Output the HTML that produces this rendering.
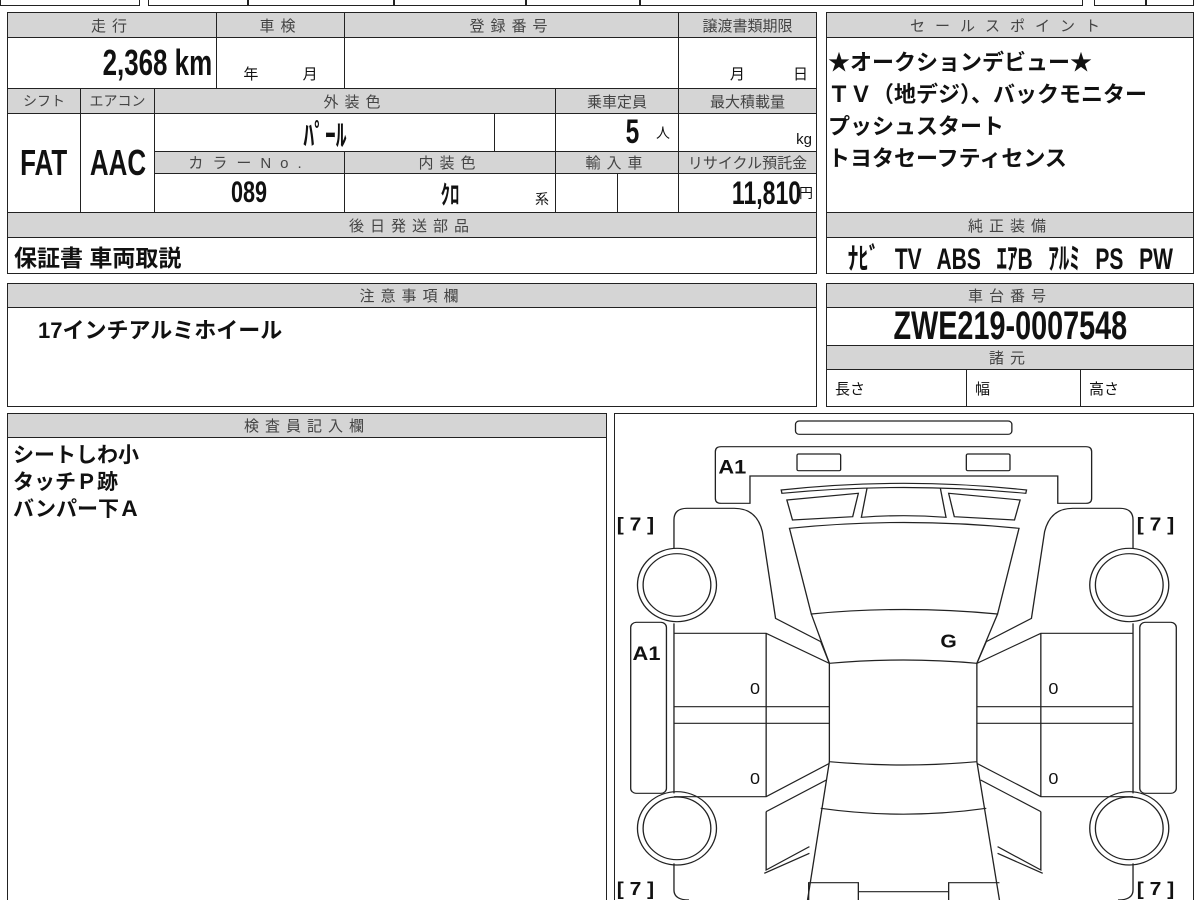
<!DOCTYPE html>
<html><head><meta charset="utf-8">
<style>
body{margin:0;width:1200px;height:900px;background:#fff;position:relative;overflow:hidden;font-family:"Liberation Sans","Noto Sans CJK JP",sans-serif;color:#111}
.c{position:absolute;border:1.5px solid #222;box-sizing:border-box;display:flex;align-items:center;justify-content:center;overflow:hidden;white-space:nowrap}
.h{background:#d5d5d5;color:#444;font-size:15px;letter-spacing:6px}
.b{font-weight:bold}
.n{font-weight:bold;display:inline-block;transform:scaleX(.72)}
</style></head><body>
<!-- top strip -->
<div class="c" style="left:0;top:-10px;width:140px;height:16px"></div>
<div class="c" style="left:148px;top:-10px;width:100px;height:16px"></div>
<div class="c" style="left:248px;top:-10px;width:146px;height:16px"></div>
<div class="c" style="left:394px;top:-10px;width:132px;height:16px"></div>
<div class="c" style="left:526px;top:-10px;width:114px;height:16px"></div>
<div class="c" style="left:640px;top:-10px;width:443px;height:16px"></div>
<div class="c" style="left:1094px;top:-10px;width:52px;height:16px"></div>
<div class="c" style="left:1146px;top:-10px;width:48px;height:16px"></div>

<!-- main left table -->
<div class="c h" style="left:7px;top:12px;width:210px;height:26px">走行</div>
<div class="c h" style="left:216px;top:12px;width:129px;height:26px">車検</div>
<div class="c h" style="left:344px;top:12px;width:335px;height:26px">登録番号</div>
<div class="c h" style="left:678px;top:12px;width:139px;height:26px;letter-spacing:0">譲渡書類期限</div>

<div class="c" style="left:7px;top:37px;width:210px;height:52px;justify-content:flex-end;padding-right:4px"><span class="n" style="font-size:36px;transform-origin:right">2,368&nbsp;km</span></div>
<div class="c" style="left:216px;top:37px;width:129px;height:52px;align-items:flex-end;padding-bottom:4px;font-size:15px;word-spacing:40px">年 月</div>
<div class="c" style="left:344px;top:37px;width:335px;height:52px"></div>
<div class="c" style="left:678px;top:37px;width:139px;height:52px;align-items:flex-end;justify-content:flex-end;padding:0 8px 4px 0;font-size:15px;word-spacing:44px">月 日</div>

<div class="c h" style="left:7px;top:88px;width:74px;height:26px;letter-spacing:0;font-size:14px">シフト</div>
<div class="c h" style="left:80px;top:88px;width:75px;height:26px;letter-spacing:0;font-size:14px">エアコン</div>
<div class="c h" style="left:154px;top:88px;width:402px;height:26px">外装色</div>
<div class="c h" style="left:555px;top:88px;width:124px;height:26px;letter-spacing:0">乗車定員</div>
<div class="c h" style="left:678px;top:88px;width:139px;height:26px;letter-spacing:0">最大積載量</div>

<div class="c" style="left:7px;top:113px;width:74px;height:100px"><span class="n" style="font-size:36px">FAT</span></div>
<div class="c" style="left:80px;top:113px;width:75px;height:100px"><span class="n" style="font-size:36px">AAC</span></div>
<div class="c" style="left:154px;top:113px;width:341px;height:39px"><span class="n" style="font-size:30px">ﾊﾟｰﾙ</span></div>
<div class="c" style="left:494px;top:113px;width:62px;height:39px"></div>
<div class="c" style="left:555px;top:113px;width:124px;height:39px;justify-content:flex-end;padding-right:8px"><span class="n" style="font-size:34px">5</span><span style="font-size:14px;margin-left:14px">人</span></div>
<div class="c" style="left:678px;top:113px;width:139px;height:39px;justify-content:flex-end;align-items:flex-end;padding:0 4px 3px 0;font-size:15px">kg</div>

<div class="c h" style="left:154px;top:151px;width:191px;height:23px;font-size:15px;letter-spacing:9px">カラーNo.</div>
<div class="c h" style="left:344px;top:151px;width:212px;height:23px">内装色</div>
<div class="c h" style="left:555px;top:151px;width:124px;height:23px">輸入車</div>
<div class="c h" style="left:678px;top:151px;width:139px;height:23px;letter-spacing:0">リサイクル預託金</div>

<div class="c" style="left:154px;top:173px;width:191px;height:40px"><span class="n" style="font-size:30px">089</span></div>
<div class="c" style="left:344px;top:173px;width:212px;height:40px"><span class="n" style="font-size:26px">ｸﾛ</span><span style="position:absolute;right:6px;bottom:3px;font-size:14px">系</span></div>
<div class="c" style="left:555px;top:173px;width:63px;height:40px"></div>
<div class="c" style="left:617px;top:173px;width:62px;height:40px"></div>
<div class="c" style="left:678px;top:173px;width:139px;height:40px;justify-content:flex-end;padding-right:3px"><span class="n" style="font-size:32px;transform-origin:right;margin-right:-4px">11,810</span><span style="font-size:14px;margin-left:2px">円</span></div>

<div class="c h" style="left:7px;top:212px;width:810px;height:26px">後日発送部品</div>
<div class="c b" style="left:7px;top:237px;width:810px;height:37px;justify-content:flex-start;padding-left:6px;font-size:23px">保証書 車両取説</div>

<!-- right panel -->
<div class="c h" style="left:826px;top:12px;width:368px;height:26px;letter-spacing:10px">セールスポイント</div>
<div class="c b" style="left:826px;top:37px;width:368px;height:176px;display:block;padding:9px 0 0 1px;font-size:22px;line-height:32px;white-space:normal">★オークションデビュー★<br>ＴＶ（地デジ）、バックモニター<br>プッシュスタート<br>トヨタセーフティセンス</div>
<div class="c h" style="left:826px;top:212px;width:368px;height:26px">純正装備</div>
<div class="c" style="left:826px;top:237px;width:368px;height:37px"><span class="n" style="font-size:30px;word-spacing:14px;transform:scaleX(.7)">ﾅﾋﾞ TV ABS ｴｱB ｱﾙﾐ PS PW</span></div>

<!-- notes -->
<div class="c h" style="left:7px;top:283px;width:810px;height:25px">注意事項欄</div>
<div class="c" style="left:7px;top:307px;width:810px;height:100px;align-items:flex-start;justify-content:flex-start;padding:5px 0 0 30px;font-size:22px;font-weight:bold">17インチアルミホイール</div>

<div class="c h" style="left:826px;top:283px;width:368px;height:25px">車台番号</div>
<div class="c" style="left:826px;top:307px;width:368px;height:39px"><span class="n" style="font-size:40px">ZWE219-0007548</span></div>
<div class="c h" style="left:826px;top:345px;width:368px;height:25px">諸元</div>
<div class="c" style="left:826px;top:369px;width:141px;height:38px;justify-content:flex-start;padding-left:8px;font-size:15px">長さ</div>
<div class="c" style="left:966px;top:369px;width:115px;height:38px;justify-content:flex-start;padding-left:8px;font-size:15px">幅</div>
<div class="c" style="left:1080px;top:369px;width:114px;height:38px;justify-content:flex-start;padding-left:8px;font-size:15px">高さ</div>

<!-- inspector -->
<div class="c h" style="left:7px;top:413px;width:600px;height:25px">検査員記入欄</div>
<div class="c b" style="left:7px;top:437px;width:600px;height:463px;border-bottom:none;display:block;padding:4px 0 0 5px;font-size:21px;line-height:27px;white-space:normal">シートしわ小<br>タッチＰ跡<br>バンパー下Ａ</div>

<!-- diagram -->
<div class="c" style="left:614px;top:413px;width:580px;height:487px;border-bottom:none"></div>
<svg style="position:absolute;left:610px;top:410px" width="590" height="490" viewBox="0 0 1568 1470" preserveAspectRatio="none">
<g fill="none" stroke="#222" stroke-width="3.5">
<rect x="493" y="33" width="575" height="40" rx="10"/>
<path d="M295 110H1265q15 0 15 15V265q0 15-15 15H1190V198H372V280H295q-15 0-15-15V125q0-15 15-15Z"/>
<rect x="497" y="132" width="116" height="50" rx="4"/>
<rect x="947" y="132" width="116" height="50" rx="4"/>
<path d="M455 240Q780 200 1107 240L1105 250Q780 215 457 250Z"/>
<path d="M470 270L660 250L645 320L485 330Z"/>
<path d="M1090 270L900 250L915 320L1075 330Z"/>
<path d="M683 235L668 322Q780 312 893 322L878 235"/>
<path d="M477 355Q780 320 1087 355L1030 612Q780 585 535 612Z"/>
<path d="M535 612L583 760Q780 740 975 760L1030 612"/>
<path d="M170 415V330q0-35 35-35H330q60 0 75 70L440 625L560 695L583 760"/>
<path d="M1390 415V330q0-35-35-35H1230q-60 0-75 70L1120 625L1000 695L975 760"/>
<ellipse cx="178" cy="525" rx="105" ry="110"/><ellipse cx="178" cy="525" rx="90" ry="94"/>
<ellipse cx="1380" cy="525" rx="105" ry="110"/><ellipse cx="1380" cy="525" rx="90" ry="94"/>
<ellipse cx="178" cy="1255" rx="105" ry="110"/><ellipse cx="178" cy="1255" rx="90" ry="94"/>
<ellipse cx="1380" cy="1255" rx="105" ry="110"/><ellipse cx="1380" cy="1255" rx="90" ry="94"/>
<rect x="55" y="637" width="95" height="513" rx="15"/>
<rect x="1408" y="637" width="97" height="513" rx="15"/>
<path d="M170 670H415L583 760"/><path d="M415 670V1160"/><path d="M170 640V1150"/>
<path d="M170 890H583M170 940H583"/><path d="M170 1160H415L583 1060"/>
<path d="M1390 670H1145L975 760"/><path d="M1145 670V1160"/><path d="M1390 640V1150"/>
<path d="M1390 890H975M1390 940H975"/><path d="M1390 1160H1145L975 1060"/>
<path d="M583 760V1055Q780 1075 975 1055V760"/>
<path d="M583 1055L525 1470M975 1055L1035 1470"/>
<path d="M560 1195Q780 1230 1000 1195"/>
<path d="M415 1205L575 1110M415 1205V1380L530 1310"/>
<path d="M1145 1205L985 1110M1145 1205V1380L1030 1310"/>
<path d="M170 1360V1440q0 30 40 30"/><path d="M410 1390L530 1330"/>
<path d="M1390 1360V1440q0 30-40 30"/><path d="M1150 1390L1030 1330"/>
<path d="M528 1470V1418H660V1470M900 1470V1418H1035"/><path d="M660 1445H900"/>
</g>
<g font-family="Liberation Sans, sans-serif" font-weight="bold" fill="#111" transform="scale(1,1)">
<text x="288" y="190" font-size="58">A1</text>
<text x="60" y="750" font-size="58">A1</text>
<text x="878" y="712" font-size="56">G</text>
<g font-size="48" font-weight="normal"><text x="372" y="852">0</text><text x="372" y="1122">0</text><text x="1165" y="852">0</text><text x="1165" y="1122">0</text></g>
<g font-size="56"><text x="18" y="362">[ 7 ]</text><text x="1400" y="362">[ 7 ]</text><text x="18" y="1455">[ 7 ]</text><text x="1400" y="1455">[ 7 ]</text></g>
</g>
</svg>
</body></html>
